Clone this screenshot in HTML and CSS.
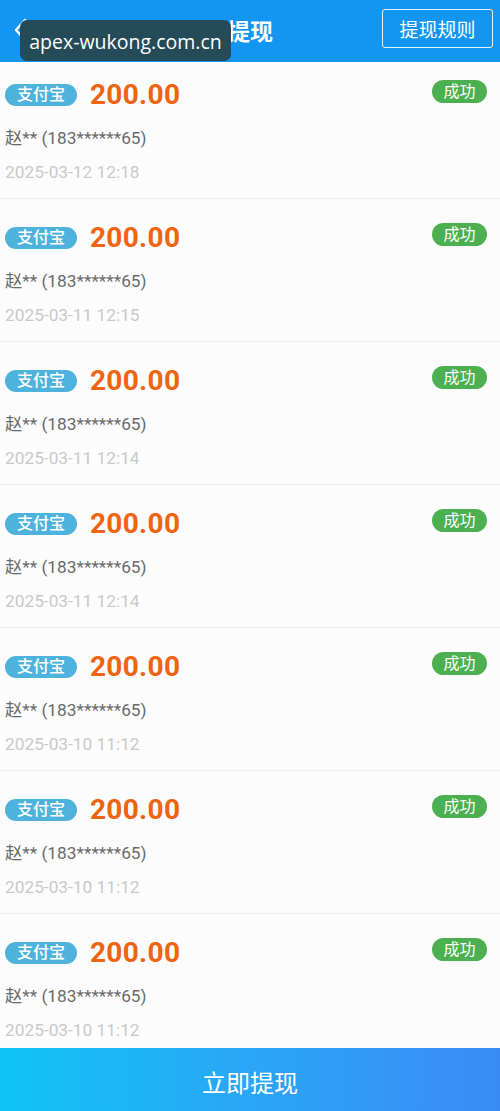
FILE: index.html
```html
<!DOCTYPE html>
<html lang="zh">
<head>
<meta charset="utf-8">
<title>提现</title>
<link rel="stylesheet" href="styles.css">
</head>
<body>
<div class="page">
  <header class="topbar">
    <div class="back">
      <svg width="14" height="24" viewBox="0 0 14 24"><path d="M12 2 L3 12 L12 22" fill="none" stroke="#fff" stroke-width="2.4" stroke-linecap="round" stroke-linejoin="round"/></svg>
    </div>
    <h1 class="title">提现</h1>
    <button class="rules">提现规则</button>
    <div class="watermark">apex-wukong.com.cn</div>
  </header>
  <main class="scroller">
    <ul class="list">
      <li class="item">
        <div class="row"><span class="tag">支付宝</span><span class="amount">200.00</span><span class="status">成功</span></div>
        <div class="name">赵** (183******65)</div>
        <div class="date">2025-03-12 12:18</div>
      </li>
      <li class="item">
        <div class="row"><span class="tag">支付宝</span><span class="amount">200.00</span><span class="status">成功</span></div>
        <div class="name">赵** (183******65)</div>
        <div class="date">2025-03-11 12:15</div>
      </li>
      <li class="item">
        <div class="row"><span class="tag">支付宝</span><span class="amount">200.00</span><span class="status">成功</span></div>
        <div class="name">赵** (183******65)</div>
        <div class="date">2025-03-11 12:14</div>
      </li>
      <li class="item">
        <div class="row"><span class="tag">支付宝</span><span class="amount">200.00</span><span class="status">成功</span></div>
        <div class="name">赵** (183******65)</div>
        <div class="date">2025-03-11 12:14</div>
      </li>
      <li class="item">
        <div class="row"><span class="tag">支付宝</span><span class="amount">200.00</span><span class="status">成功</span></div>
        <div class="name">赵** (183******65)</div>
        <div class="date">2025-03-10 11:12</div>
      </li>
      <li class="item">
        <div class="row"><span class="tag">支付宝</span><span class="amount">200.00</span><span class="status">成功</span></div>
        <div class="name">赵** (183******65)</div>
        <div class="date">2025-03-10 11:12</div>
      </li>
      <li class="item">
        <div class="row"><span class="tag">支付宝</span><span class="amount">200.00</span><span class="status">成功</span></div>
        <div class="name">赵** (183******65)</div>
        <div class="date">2025-03-10 11:12</div>
      </li>
    </ul>
  </main>
  <footer class="bottom">
    <button class="withdraw">立即提现</button>
  </footer>
</div>
</body>
</html>
```

FILE: styles.css
```css
* { box-sizing: border-box; }
html, body { margin: 0; padding: 0; }
body {
  font-family: Roboto, "Noto Sans CJK SC", sans-serif;
  background: #fcfcfc;
}
.page {
  width: 500px;
  height: 1111px;
  display: flex;
  flex-direction: column;
  overflow: hidden;
}
.topbar {
  position: relative;
  height: 62px;
  flex: none;
  background: #1296f2;
  display: flex;
  align-items: center;
  justify-content: center;
}
.back {
  position: absolute;
  left: 13px;
  top: 18px;
}
.title {
  margin: 0;
  color: #fff;
  font-size: 23px;
  font-weight: 700;
  line-height: 1;
  padding-top: 2px;
}
.rules {
  position: absolute;
  right: 7px;
  top: 9px;
  width: 111px;
  height: 39px;
  border: 1.5px solid #dff4ff;
  border-radius: 3px;
  background: transparent;
  color: #fff;
  font-family: inherit;
  font-size: 19px;
  padding: 0;
}
.watermark {
  position: absolute;
  left: 20px;
  top: 20px;
  width: 211px;
  height: 41px;
  background: #264b58;
  border-radius: 7px;
  color: #fff;
  font-family: "Open Sans", "Noto Sans", sans-serif;
  font-size: 19.5px;
  display: flex;
  align-items: center;
  justify-content: center;
  padding-top: 2px;
}
.scroller {
  flex: 1;
  overflow: hidden;
}
.list {
  list-style: none;
  margin: -6px 0 0 0;
  padding: 0;
}
.item {
  height: 143px;
  padding: 23px 13px 0 5px;
  border-bottom: 1px solid #efeaee;
}
.row {
  height: 32px;
  display: flex;
  align-items: center;
}
.tag {
  height: 22px;
  width: 72px;
  border-radius: 11px;
  background: #4db3dd;
  color: #fff;
  font-size: 16px;
  line-height: 22px;
  text-align: center;
  font-weight: 500;
}
.amount {
  margin-left: 13px;
  font-size: 28px;
  font-weight: 700;
  color: #ee6410;
  letter-spacing: 0.3px;
  line-height: 32px;
}
.status {
  margin-left: auto;
  margin-top: -8px;
  height: 23px;
  width: 55px;
  border-radius: 12px;
  background: #4caf50;
  color: #fff;
  font-size: 16px;
  line-height: 23px;
  text-align: center;
}
.name {
  margin-top: 15px;
  height: 24px;
  line-height: 24px;
  font-size: 17.3px;
  color: #6a6a6a;
}
.date {
  margin-top: 10px;
  height: 24px;
  line-height: 24px;
  font-size: 17.3px;
  color: #c9c9c9;
}
.bottom {
  flex: none;
  height: 63px;
}
.withdraw {
  width: 100%;
  height: 100%;
  border: 0;
  padding: 4px 0 0 0;
  background: linear-gradient(90deg, #0fc4f6 0%, #2aa6f6 50%, #3b8bf5 100%);
  color: #fff;
  font-family: inherit;
  font-size: 24px;
}
```
